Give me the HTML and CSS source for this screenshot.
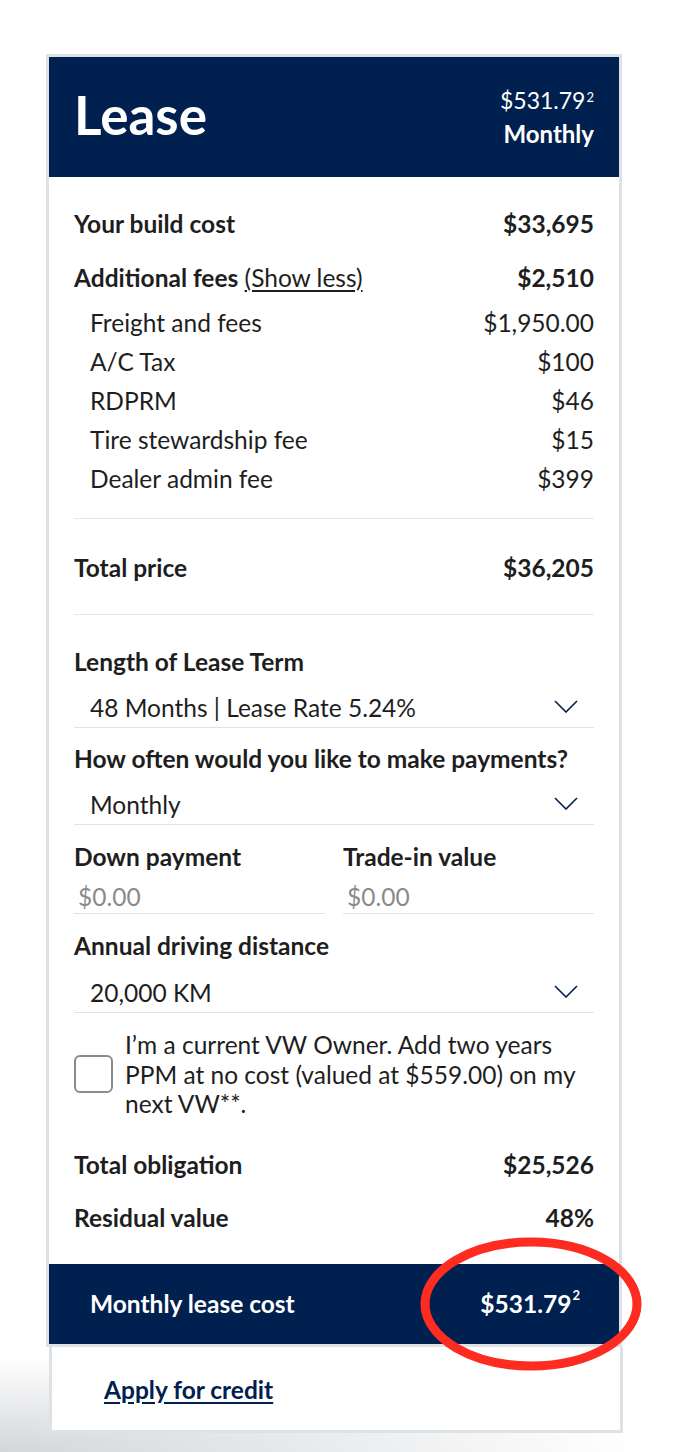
FILE: index.html
```html
<!DOCTYPE html>
<html lang="en">
<head>
<meta charset="utf-8">
<title>Lease</title>
<link rel="stylesheet" href="styles.css">
</head>
<body>
<div class="page">
  <div class="card">
    <header class="head">
      <h1 class="head-title">Lease</h1>
      <div class="head-price">
        <div class="head-amount">$531.79<sup>2</sup></div>
        <div class="head-freq">Monthly</div>
      </div>
    </header>
    <div class="content">
      <div class="row row-first"><span class="b">Your build cost</span><span class="b">$33,695</span></div>
      <div class="row row-fees"><span><span class="b">Additional fees</span> <a class="toggle" href="#">(Show less)</a></span><span class="b">$2,510</span></div>
      <ul class="fees">
        <li class="fee"><span>Freight and fees</span><span>$1,950.00</span></li>
        <li class="fee"><span>A/C Tax</span><span>$100</span></li>
        <li class="fee"><span>RDPRM</span><span>$46</span></li>
        <li class="fee"><span>Tire stewardship fee</span><span>$15</span></li>
        <li class="fee"><span>Dealer admin fee</span><span>$399</span></li>
      </ul>
      <hr class="rule rule-a">
      <div class="row row-total"><span class="b">Total price</span><span class="b">$36,205</span></div>
      <hr class="rule rule-b">

      <div class="field field-first">
        <div class="label">Length of Lease Term</div>
        <div class="select"><span>48 Months | Lease Rate 5.24%</span>
          <svg class="chev" width="24" height="13" viewBox="0 0 24 13"><path d="M1 1 L12 12 L23 1" fill="none" stroke="#00204f" stroke-width="1.6"/></svg>
        </div>
      </div>
      <div class="field">
        <div class="label">How often would you like to make payments?</div>
        <div class="select"><span>Monthly</span>
          <svg class="chev" width="24" height="13" viewBox="0 0 24 13"><path d="M1 1 L12 12 L23 1" fill="none" stroke="#00204f" stroke-width="1.6"/></svg>
        </div>
      </div>
      <div class="field pair">
        <div class="pair-col">
          <div class="label">Down payment</div>
          <div class="input">$0.00</div>
        </div>
        <div class="pair-col">
          <div class="label">Trade-in value</div>
          <div class="input">$0.00</div>
        </div>
      </div>
      <div class="field">
        <div class="label">Annual driving distance</div>
        <div class="select select-km"><span>20,000 KM</span>
          <svg class="chev" width="24" height="13" viewBox="0 0 24 13"><path d="M1 1 L12 12 L23 1" fill="none" stroke="#00204f" stroke-width="1.6"/></svg>
        </div>
      </div>
      <label class="check">
        <span class="box"></span>
        <span class="check-text">I’m a current VW Owner. Add two years PPM at no cost (valued at $559.00) on my next VW**.</span>
      </label>
      <div class="row row-oblig"><span class="b">Total obligation</span><span class="b">$25,526</span></div>
      <div class="row row-resid"><span class="b">Residual value</span><span class="b">48%</span></div>
    </div>
    <div class="bar">
      <span>Monthly lease cost</span>
      <span>$531.79<sup>2</sup></span>
    </div>
  </div>
  <div class="credit">
    <a class="credit-link" href="#">Apply for credit</a>
  </div>
  <svg class="mark" width="226" height="136" viewBox="0 0 226 136"><ellipse cx="113" cy="68" rx="106" ry="62" fill="none" stroke="#fe2b20" stroke-width="9"/></svg>
</div>
</body>
</html>
```

FILE: styles.css
```css
* { box-sizing: border-box; }
html, body { margin: 0; padding: 0; }
body {
  font-family: Lato, "Open Sans", sans-serif;
  color: #1e1e1e;
  background: #fff;
}
.page {
  position: relative;
  min-height: 1452px;
  padding: 54px 0 0 46px;
  background: radial-gradient(ellipse 640px 95px at 0 100%, #d4d6d9 0%, rgba(255,255,255,0) 100%) no-repeat;
}
.card {
  width: 576px;
  border: 3px solid #dde2e7;
  background: #fff;
}
.head {
  height: 120px;
  background: #00204f;
  color: #fff;
  display: flex;
  align-items: center;
  justify-content: space-between;
  padding: 0 25px 0 25px;
}
.head-title {
  margin: 0;
  font-size: 53px;
  font-weight: 700;
  line-height: 1;
  margin-top: -6px;
}
.head-price { text-align: right; margin-top: 4px; }
.head-amount { font-size: 23px; line-height: 30px; }
.head-freq { font-size: 24px; font-weight: 700; line-height: 38px; }
sup { font-size: 13px; vertical-align: top; position: relative; top: -3px; margin-left: 1px; }
.bar sup { top: -2px; font-size: 13px; }

.content { padding: 32px 25px 31px; }
.row {
  display: flex;
  justify-content: space-between;
  font-size: 24.5px;
  line-height: 30px;
}
.b { font-weight: 700; }
.row-fees { margin-top: 24px; }
.toggle { color: #1e1e1e; text-decoration: underline; text-underline-offset: 3px; font-size: 24.5px; }
.fees { list-style: none; margin: 10px 0 0; padding: 0 0 0 16px; }
.fee {
  display: flex;
  justify-content: space-between;
  font-size: 24.5px;
  line-height: 39px;
}
.rule { border: 0; border-top: 1px solid #e1e4e8; margin: 0; }
.rule-a { margin-top: 20px; }
.row-total { margin-top: 34px; }
.rule-b { margin-top: 31px; }

.field { margin-top: 16px; }
.field-first { margin-top: 32px; }
.label { font-size: 24.5px; font-weight: 700; line-height: 30px; }
.select {
  margin-top: 10px;
  height: 41px;
  border-bottom: 1px solid #dfe3e7;
  display: flex;
  align-items: center;
  justify-content: space-between;
  padding: 0 16px 0 16px;
  font-size: 24.5px;
}
.select-km { margin-top: 11px; }
.chev { display: block; margin-top: -2px; }
.pair { display: grid; grid-template-columns: 251px 251px; column-gap: 18px; margin-top: 17px; }
.input {
  margin-top: 1px;
  height: 41px;
  padding: 8px 0 0 4px;
  line-height: 32px;
  font-size: 24.5px;
  color: #8a8a8a;
  border-bottom: 1px solid #dfe3e7;
}
.pair + .field { margin-top: 17px; }

.check {
  display: flex;
  align-items: center;
  margin-top: 17px;
  gap: 12px;
}
.box {
  flex: none;
  width: 39px;
  height: 38px;
  border: 2px solid #8b8b8b;
  border-radius: 6px;
}
.check-text { font-size: 24.5px; line-height: 29.5px; }
.row-oblig { margin-top: 31px; }
.row-resid { margin-top: 23px; }

.bar {
  height: 80px;
  background: #00204f;
  color: #fff;
  display: flex;
  align-items: center;
  justify-content: space-between;
  padding: 0 39px 0 41px;
  font-size: 24.5px;
  font-weight: 700;
}
.credit {
  margin-left: 3px;
  width: 574px;
  height: 86px;
  border: 3px solid #dde2e7;
  border-top: 0;
  background: #fff;
  padding: 28px 0 0 52px;
}
.credit-link {
  color: #00204f;
  font-weight: 700;
  font-size: 24.5px;
  line-height: 30px;
  text-decoration: underline;
  text-underline-offset: 3px;
}
.mark { position: absolute; left: 418px; top: 1236px; }
```
